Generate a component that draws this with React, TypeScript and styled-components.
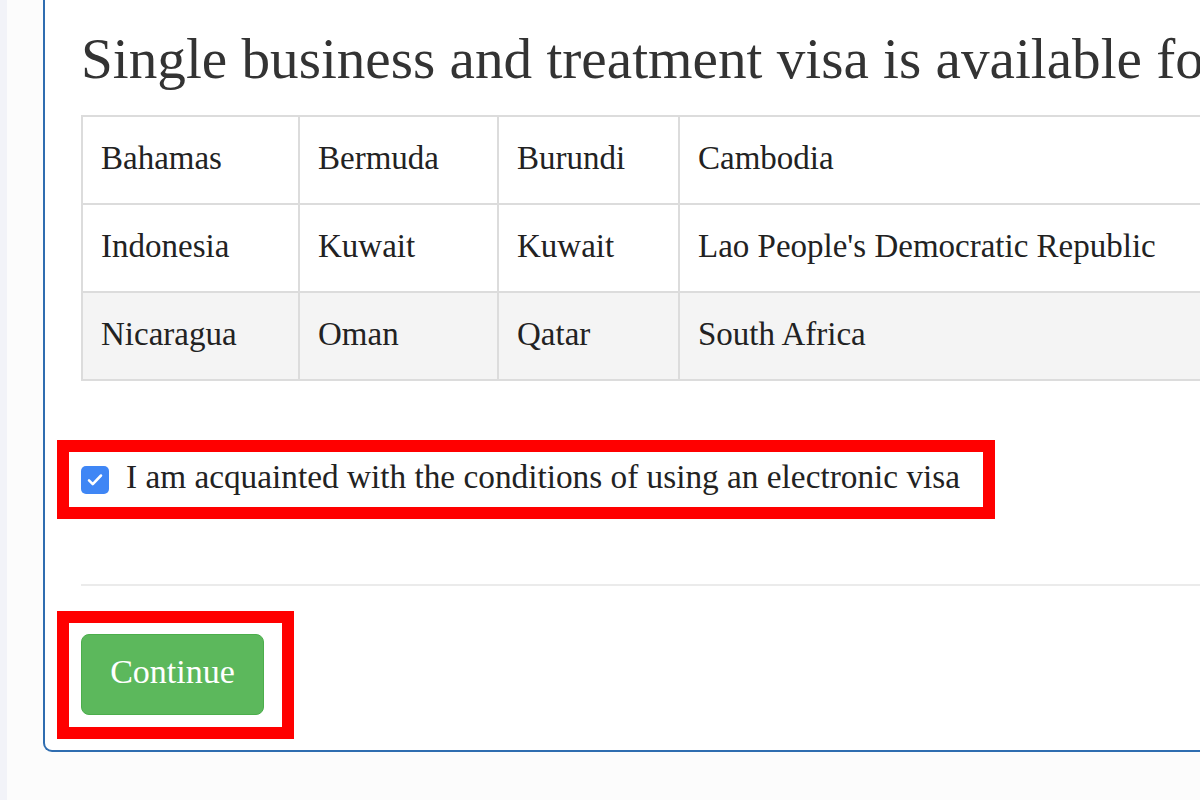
import styled, { createGlobalStyle } from "styled-components"

const GlobalStyle = createGlobalStyle`
  html, body {
    margin: 0;
    padding: 0;
    height: 100%;
    overflow: hidden;
    background: #fcfcfc;
  }
  body {
    font-family: "Liberation Serif", "Times New Roman", serif;
    color: #333;
  }
`

const Page = styled.div`
  display: flex;
  width: 1200px;
  height: 800px;
  overflow: hidden;
`

const SideStrip = styled.div`
  flex: 0 0 7px;
  background: #f2f3f8;
`

const Main = styled.div`
  flex: 1;
  padding-left: 36px;
  min-width: 0;
`

const Card = styled.div`
  width: 1400px;
  height: 752px;
  box-sizing: border-box;
  background: #fff;
  border: 2px solid #2f6db0;
  border-top: none;
  border-radius: 0 0 9px 9px;
  padding: 0 0 0 36px;
  display: flex;
  flex-direction: column;
`

const Title = styled.h1`
  margin: 19px 0 0;
  font-size: 57.2px;
  font-weight: 400;
  line-height: 80px;
  white-space: nowrap;
  color: #333;
`

const Table = styled.table`
  margin-top: 16px;
  border-collapse: collapse;
  table-layout: fixed;
  font-size: 33px;
  width: 1300px;
`

const Row = styled.tr<{ $striped?: boolean }>`
  height: 88px;
  background: ${({ $striped }) => ($striped ? "#f4f4f4" : "#fff")};
`

const Cell = styled.td<{ $w?: number }>`
  box-sizing: border-box;
  border: 2px solid #dcdcdc;
  padding: 0 18px;
  width: ${({ $w }) => ($w ? `${$w}px` : "auto")};
  white-space: nowrap;
  overflow: hidden;
  color: #222;
  vertical-align: middle;
  padding-bottom: 4px;
`

const Highlight = styled.div<{ $w: number; $h: number }>`
  box-sizing: border-box;
  width: ${({ $w }) => $w}px;
  height: ${({ $h }) => $h}px;
  border: 12px solid #ff0000;
  margin-left: -24px;
  display: flex;
  align-items: center;
  padding-left: 12px;
`

const AgreeBox = styled(Highlight)`
  margin-top: 59px;
`

const ButtonBox = styled(Highlight)`
  margin-top: 25px;
`

const CheckLabel = styled.label`
  display: flex;
  align-items: center;
  gap: 17px;
  font-size: 33.3px;
  color: #222;
  padding-bottom: 6px;
  white-space: nowrap;
`

const CheckBox = styled.span`
  flex: 0 0 28px;
  width: 28px;
  height: 28px;
  border-radius: 5px;
  background: #3f86f5;
  display: flex;
  align-items: center;
  justify-content: center;
  margin-top: 6px;
`

const Divider = styled.hr`
  margin: 65px 0 0;
  border: none;
  border-top: 2px solid #ebebeb;
`

const ContinueButton = styled.button`
  box-sizing: border-box;
  width: 183px;
  height: 81px;
  border-radius: 8px;
  background: #5cb85c;
  border: 1.5px solid #4cae4c;
  color: #fff;
  font-family: "Liberation Serif", "Times New Roman", serif;
  font-size: 34px;
  padding: 0 0 4px;
  margin-top: -2px;
`

const rows = [
  ["Bahamas", "Bermuda", "Burundi", "Cambodia"],
  ["Indonesia", "Kuwait", "Kuwait", "Lao People's Democratic Republic"],
  ["Nicaragua", "Oman", "Qatar", "South Africa"],
]

const widths = [217, 199, 181, 703]

export default function App() {
  return (
    <>
      <GlobalStyle />
      <Page>
        <SideStrip />
        <Main>
          <Card>
            <Title>Single business and treatment visa is available for citizens of</Title>
            <Table>
              <tbody>
                {rows.map((row, i) => (
                  <Row key={i} $striped={i === 2}>
                    {row.map((c, j) => (
                      <Cell key={j} $w={widths[j]}>
                        {c}
                      </Cell>
                    ))}
                  </Row>
                ))}
              </tbody>
            </Table>
            <AgreeBox $w={938} $h={79}>
              <CheckLabel>
                <CheckBox>
                  <svg width="18" height="18" viewBox="0 0 24 24" fill="none">
                    <path d="M4 12.5l5 5L20 6" stroke="#fff" strokeWidth="3.4" strokeLinecap="round" strokeLinejoin="round" />
                  </svg>
                </CheckBox>
                I am acquainted with the conditions of using an electronic visa
              </CheckLabel>
            </AgreeBox>
            <Divider />
            <ButtonBox $w={237} $h={128}>
              <ContinueButton>Continue</ContinueButton>
            </ButtonBox>
          </Card>
        </Main>
      </Page>
    </>
  )
}
